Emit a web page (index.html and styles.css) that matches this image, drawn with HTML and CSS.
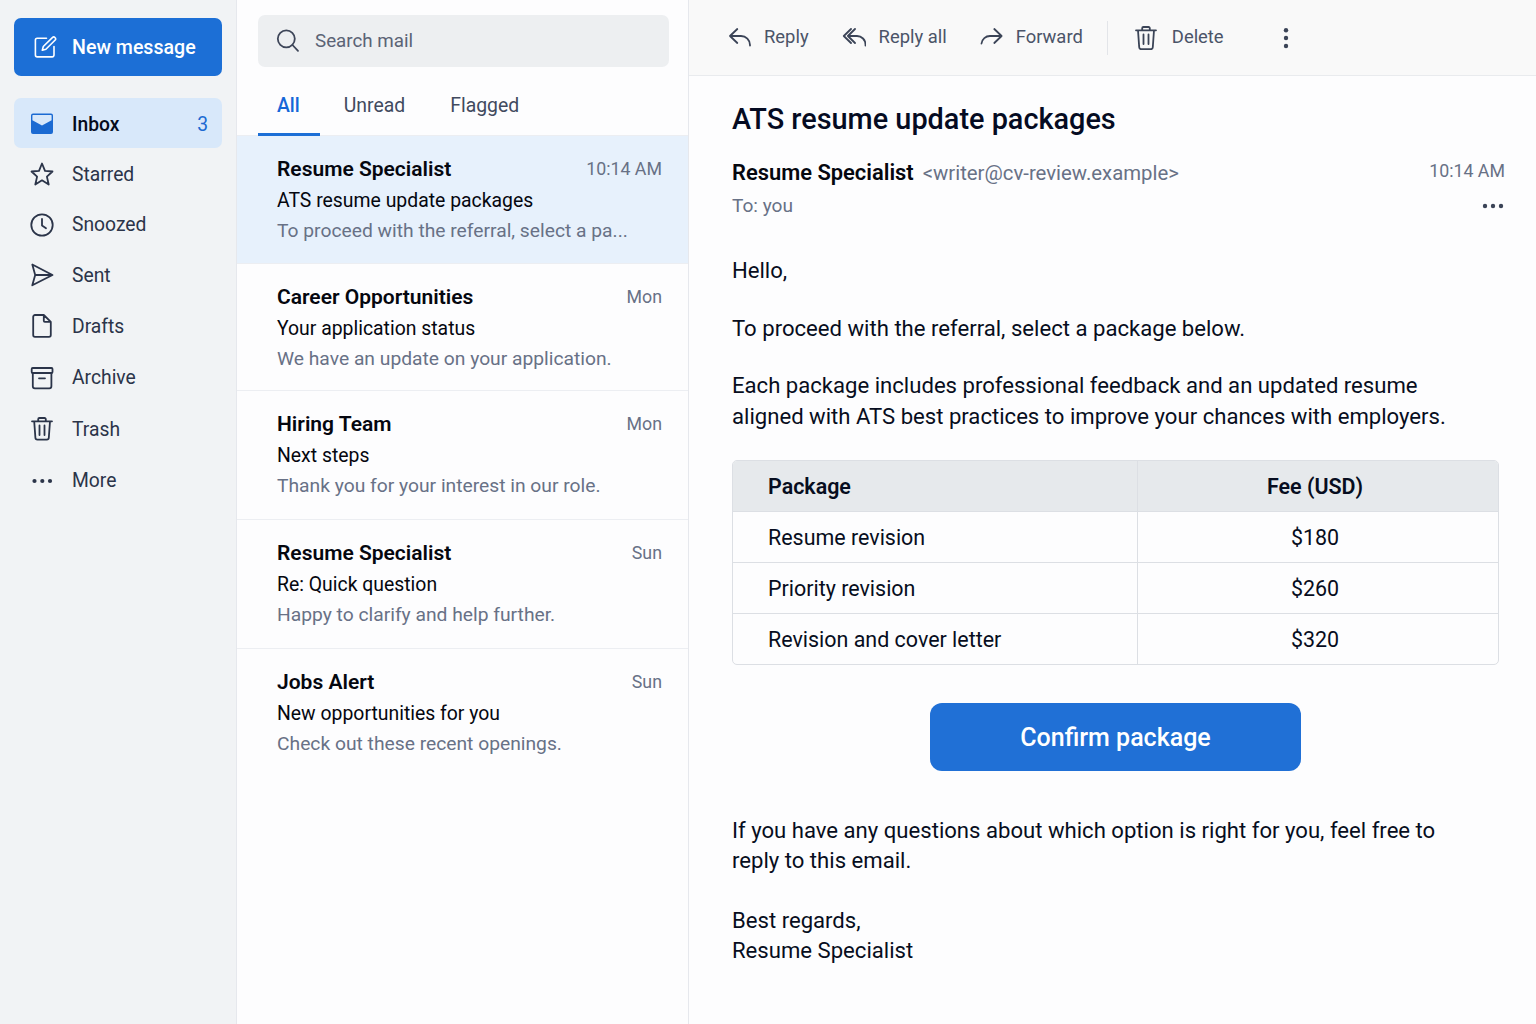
FILE: index.html
```html
<!DOCTYPE html>
<html lang="en">
<head>
<meta charset="utf-8">
<title>Mail</title>
<meta name="viewport" content="width=device-width, initial-scale=1.0">
<link rel="stylesheet" href="styles.css">
</head>
<body>
<div class="app">

  <aside class="sidebar">
    <button class="new-message">
      <svg class="icon" viewBox="0 0 24 24"><path d="M13.500 3.300H4.200a1.800 1.800 0 0 0-1.800 1.800v15a1.800 1.800 0 0 0 1.800 1.800h15a1.800 1.800 0 0 0 1.800-1.800V11.500"/><path d="M9.300 15.200l1-3.700 9.300-9.100a1.500 1.500 0 0 1 2.200 0l.4.400a1.500 1.500 0 0 1 0 2.200l-9.300 9.200z"/></svg>
      <span>New message</span>
    </button>
    <nav class="folders">
      <a class="folder active">
        <svg class="icon" viewBox="0 0 24 24"><path fill="currentColor" stroke="none" fill-rule="evenodd" d="M3 1.500h18a2 2 0 0 1 2 2V20a2 2 0 0 1-2 2H3a2 2 0 0 1-2-2V3.500a2 2 0 0 1 2-2zM3 3a.6.600 0 0 0-.6.600V8.200L12 13.500l9.600-5.300V3.600a.6.600 0 0 0-.6-.6z"/></svg>
        <span>Inbox</span>
        <b class="count">3</b>
      </a>
      <a class="folder">
        <svg class="icon" viewBox="0 0 24 24"><path d="M12 1.500l3 7.300 7.500.700-5.600 5.100 1.800 7.900L12 18.300l-6.700 4.200 1.800-7.900L1.500 9.500 9 8.800z"/></svg>
        <span>Starred</span>
      </a>
      <a class="folder">
        <svg class="icon" viewBox="0 0 24 24"><circle cx="12" cy="12" r="10.700"/><path d="M12 6v6.500l4 2.700"/></svg>
        <span>Snoozed</span>
      </a>
      <a class="folder">
        <svg class="icon" viewBox="0 0 24 24"><path d="M2.300 1.500L22.500 12 2.300 22.300 5.200 12zM5.200 12h17"/></svg>
        <span>Sent</span>
      </a>
      <a class="folder">
        <svg class="icon" viewBox="0 0 24 24"><path d="M5 1h8.800l7 6.800V21a1.800 1.800 0 0 1-1.800 1.800H5A1.800 1.800 0 0 1 3.200 21V2.800A1.800 1.800 0 0 1 5 1zM13.800 1v5.800a1 1 0 0 0 1 1h6"/></svg>
        <span>Drafts</span>
      </a>
      <a class="folder">
        <svg class="icon" viewBox="0 0 24 24"><rect x="1.700" y="2" width="20.800" height="5" rx="1"/><path d="M2.800 7v13.300a2 2 0 0 0 2 2h14.600a2 2 0 0 0 2-2V7M9 12.300h6"/></svg>
        <span>Archive</span>
      </a>
      <a class="folder">
        <svg class="icon" viewBox="0 0 24 24"><path d="M2 4.300h20M8.200 4.300V2.200A1.200 1.200 0 0 1 9.400 1h5.200a1.200 1.200 0 0 1 1.200 1.200v2.100M4.200 4.300l1.200 16.500a2 2 0 0 0 2 1.900h9.400a2 2 0 0 0 2-1.900L20 4.300M9.500 8.500v9.500M14.500 8.500v9.500"/></svg>
        <span>Trash</span>
      </a>
      <a class="folder">
        <svg class="icon dots" viewBox="0 0 24 24"><circle cx="4.500" cy="12" r="2.100"/><circle cx="12.300" cy="12" r="2.100"/><circle cx="20" cy="12" r="2.100"/></svg>
        <span>More</span>
      </a>
    </nav>
  </aside>

  <section class="list">
    <div class="search">
      <svg class="icon" viewBox="0 0 24 24"><circle cx="10.300" cy="9.800" r="8.500"/><path d="M16.500 16l5.500 5.800"/></svg>
      <span>Search mail</span>
    </div>
    <div class="tabs">
      <a class="tab active">All</a>
      <a class="tab">Unread</a>
      <a class="tab">Flagged</a>
    </div>
    <div class="mails">
      <article class="mail selected">
        <div class="mail-top"><h3>Resume Specialist</h3><time>10:14 AM</time></div>
        <p class="subject">ATS resume update packages</p>
        <p class="preview">To proceed with the referral, select a pa...</p>
      </article>
      <article class="mail">
        <div class="mail-top"><h3>Career Opportunities</h3><time>Mon</time></div>
        <p class="subject">Your application status</p>
        <p class="preview">We have an update on your application.</p>
      </article>
      <article class="mail">
        <div class="mail-top"><h3>Hiring Team</h3><time>Mon</time></div>
        <p class="subject">Next steps</p>
        <p class="preview">Thank you for your interest in our role.</p>
      </article>
      <article class="mail">
        <div class="mail-top"><h3>Resume Specialist</h3><time>Sun</time></div>
        <p class="subject">Re: Quick question</p>
        <p class="preview">Happy to clarify and help further.</p>
      </article>
      <article class="mail">
        <div class="mail-top"><h3>Jobs Alert</h3><time>Sun</time></div>
        <p class="subject">New opportunities for you</p>
        <p class="preview">Check out these recent openings.</p>
      </article>
    </div>
  </section>

  <main class="reader">
    <div class="toolbar">
      <a class="tool reply">
        <svg class="icon" viewBox="0 0 24 24"><path d="M9.300 3L2 10l7.300 7M2 10h11a9 9 0 0 1 9 9v.5"/></svg>
        <span>Reply</span>
      </a>
      <a class="tool reply-all">
        <svg class="icon" viewBox="0 0 24 24"><path d="M9 3L1.800 10 9 17M13 3L5.900 10l7.100 7M5.900 10H15a8.500 8.500 0 0 1 8.500 8.500v1"/></svg>
        <span>Reply all</span>
      </a>
      <a class="tool forward">
        <svg class="icon" viewBox="0 0 24 24"><path d="M15.300 3l7.300 7-7.300 7M22.600 10H11a8.500 8.500 0 0 0-8.500 7.500"/></svg>
        <span>Forward</span>
      </a>
      <i class="divider"></i>
      <a class="tool delete">
        <svg class="icon" viewBox="0 0 24 24"><path d="M2 4.300h20M8.200 4.300V2.200A1.200 1.200 0 0 1 9.400 1h5.200a1.200 1.200 0 0 1 1.200 1.200v2.100M4 4.300l1.200 17a2 2 0 0 0 2 1.900h9.600a2 2 0 0 0 2-1.900L20 4.300M9.500 8.500v9.500M14.500 8.500v9.500"/></svg>
        <span>Delete</span>
      </a>
      <svg class="icon dots" viewBox="0 0 24 24"><circle cx="12" cy="4.200" r="2.200"/><circle cx="12" cy="12" r="2.200"/><circle cx="12" cy="20" r="2.200"/></svg>
    </div>

    <div class="message">
      <h1>ATS resume update packages</h1>
      <div class="meta">
        <div class="from"><strong>Resume Specialist</strong><span class="address">&lt;writer@cv-review.example&gt;</span></div>
        <time>10:14 AM</time>
      </div>
      <div class="meta second">
        <span class="to">To: you</span>
        <svg class="icon dots" viewBox="0 0 24 24"><circle cx="4" cy="12" r="2.200"/><circle cx="12" cy="12" r="2.200"/><circle cx="20" cy="12" r="2.200"/></svg>
      </div>

      <div class="body">
        <p>Hello,</p>
        <p>To proceed with the referral, select a package below.</p>
        <p>Each package includes professional feedback and an updated resume<br>aligned with ATS best practices to improve your chances with employers.</p>
      </div>

      <table class="packages">
        <thead>
          <tr><th>Package</th><th>Fee (USD)</th></tr>
        </thead>
        <tbody>
          <tr><td>Resume revision</td><td>$180</td></tr>
          <tr><td>Priority revision</td><td>$260</td></tr>
          <tr><td>Revision and cover letter</td><td>$320</td></tr>
        </tbody>
      </table>

      <button class="confirm">Confirm package</button>

      <div class="body closing">
        <p>If you have any questions about which option is right for you, feel free to<br>reply to this email.</p>
        <p>Best regards,<br>Resume Specialist</p>
      </div>
    </div>
  </main>

</div>
</body>
</html>
```

FILE: styles.css
```css
* { box-sizing: border-box; }
body {
  margin: 0;
  font-family: Roboto, "Liberation Sans", sans-serif;
  color: #070d20;
  background: #fdfdfe;
}
h1, h3, p { margin: 0; }
button { font-family: inherit; border: none; }
.app {
  display: grid;
  grid-template-columns: 237px 452px 1fr;
  height: 1024px;
  overflow: hidden;
}
.icon {
  width: 24px;
  height: 24px;
  flex: none;
  fill: none;
  stroke: currentColor;
  stroke-width: 1.8;
  stroke-linecap: round;
  stroke-linejoin: round;
}
.dots { fill: currentColor; stroke: none; }

/* sidebar */
.sidebar {
  background: #f1f3f5;
  border-right: 1px solid #e6e8ed;
  padding: 18px 14px;
}
.new-message {
  display: flex;
  align-items: center;
  gap: 15px;
  width: 208px;
  height: 58px;
  padding: 0 0 0 19px;
  border-radius: 7px;
  background: #1c6fd6;
  color: #fff;
  font-size: 19.6px;
  font-weight: 500;
}
.new-message .icon { stroke-width: 1.6; }
.folders {
  display: grid;
  grid-template-rows: 50px 51px 50px 51px 51px 52px 51px 52px;
  margin-top: 22px;
}
.folder {
  display: flex;
  align-items: center;
  gap: 18px;
  padding: 1px 14px 0 16px;
  border-radius: 7px;
  font-size: 19.3px;
  color: #2b3449;
}
.folder.active { padding-top: 2px; background: #d8e8fa; color: #1b6ad2; }
.folder.active span { color: #050b1c; font-weight: 500; }
.count { margin-left: auto; font-weight: 400; }

/* message list */
.list { border-right: 1px solid #e6e8ed; }
.search {
  display: flex;
  align-items: center;
  gap: 15px;
  height: 52px;
  margin: 15px 19px 0 21px;
  padding-left: 18px;
  border-radius: 7px;
  background: #edeff1;
  color: #5b6375;
  font-size: 18.8px;
}
.search .icon { color: #3e4659; }
.tabs {
  display: flex;
  gap: 5px;
  height: 69px;
  padding-left: 21px;
  border-bottom: 1px solid #eceef2;
}
.tab {
  padding: 26px 21px 0 19px;
  line-height: 26px;
  font-size: 19.4px;
  color: #414a5e;
}
.tab.active {
  margin-bottom: -1px;
  padding-right: 20px;
  color: #1567d8;
  font-weight: 500;
  border-bottom: 3px solid #1c6fd6;
  border-radius: 2px 2px 0 0;
}
.mails {
  display: grid;
  grid-template-rows: 128px 127px 129px 129px 129px;
}
.mail {
  padding: 18px 26px 0 40px;
  border-bottom: 1px solid #eceef2;
}
.mail:last-child { border-bottom: none; }
.mail.selected { background: #e7f1fc; }
.mail-top {
  display: flex;
  justify-content: space-between;
  line-height: 30px;
}
.mail h3 { font-size: 21px; font-weight: 600; color: #05070f; }
time { font-size: 17.8px; color: #687186; }
.mail time { line-height: 29px; }
.subject { font-size: 19.4px; line-height: 34px; color: #05070f; }
.preview { font-size: 19.25px; line-height: 26px; color: #687186; }

/* reading pane */
.toolbar {
  display: flex;
  align-items: center;
  height: 76px;
  padding-left: 39px;
  background: #f9f9f9;
  border-bottom: 1px solid #e9ebee;
  font-size: 18.4px;
  color: #4b5468;
}
.tool { display: flex; align-items: center; }
.tool span { padding-bottom: 2px; }
.tool .icon, .toolbar .dots { color: #3b4457; }
.reply .icon { margin-right: 12px; }
.reply-all { margin-left: 33px; }
.reply-all .icon { margin-right: 13px; }
.forward { margin-left: 32px; }
.forward .icon { margin-right: 13px; }
.divider {
  width: 1px;
  height: 34px;
  margin: 0 26px 0 24px;
  background: #e3e5e9;
}
.delete .icon { margin-right: 14px; }
.toolbar .dots { margin-left: 50px; }

.message { padding: 26px 31px 0 43px; }
h1 { font-size: 28.85px; font-weight: 500; line-height: 34px; color: #050b22; }
.meta {
  display: flex;
  justify-content: space-between;
  align-items: center;
  height: 34px;
  margin-top: 19px;
}
.meta.second { margin-top: 0; height: 33px; }
.meta time { padding-bottom: 3px; }
.from strong { font-size: 21.9px; font-weight: 600; color: #05070f; }
.address { margin-left: 9px; font-size: 20.35px; color: #687186; }
.to { font-size: 19.1px; color: #687186; }
.meta .dots { color: #3b4457; }
.body {
  margin-top: 33px;
  font-size: 22.12px;
  line-height: 30.5px;
}
.body p + p { margin-top: 27px; }
.packages {
  width: 767px;
  margin-top: 29px;
  border: 1px solid #dcdfe4;
  border-radius: 5px;
  border-spacing: 0;
  overflow: hidden;
  font-size: 21.45px;
}
.packages th, .packages td {
  height: 51px;
  padding: 0;
  border-bottom: 1px solid #dcdfe4;
}
.packages th { background: #e6e9ec; font-weight: 600; }
.packages tr > :first-child {
  width: 405px;
  padding-left: 35px;
  text-align: left;
  border-right: 1px solid #dcdfe4;
}
.packages tr > :last-child { text-align: center; padding-right: 6px; }
.packages tbody tr:last-child td { height: 50px; border-bottom: none; }
.confirm {
  display: block;
  width: 371px;
  height: 68px;
  margin: 38px 0 0 198px;
  border-radius: 12px;
  background: #2070d6;
  color: #fff;
  font-size: 25px;
  font-weight: 500;
}
.closing { margin-top: 44px; line-height: 30px; }
.closing p + p { margin-top: 30px; }
```
